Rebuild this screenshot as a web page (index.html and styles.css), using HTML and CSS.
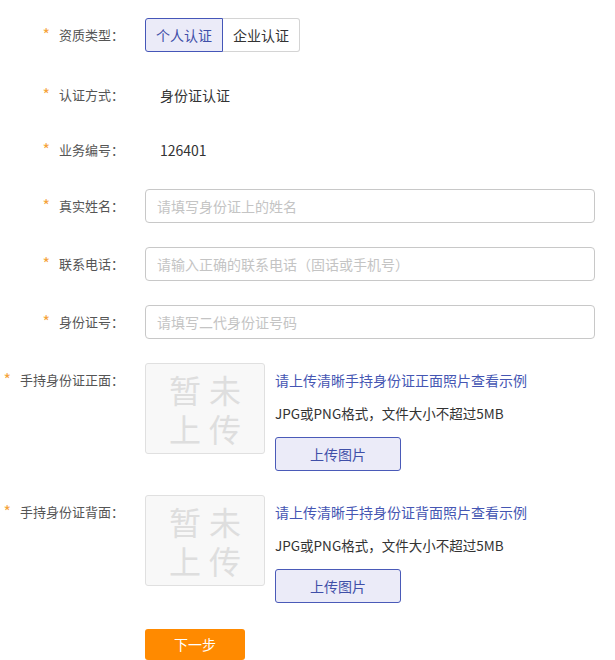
FILE: index.html
```html
<!DOCTYPE html>
<html lang="zh-CN">
<head>
<meta charset="utf-8">
<link rel="stylesheet" href="styles.css">
</head>
<body>
<form class="form">
  <div class="row row-1">
    <div class="label"><span class="star">*</span>资质类型：</div>
    <div class="field">
      <div class="toggle">
        <button type="button" class="tg tg-active">个人认证</button>
        <button type="button" class="tg">企业认证</button>
      </div>
    </div>
  </div>
  <div class="row row-2">
    <div class="label"><span class="star">*</span>认证方式：</div>
    <div class="field"><span class="value">身份证认证</span></div>
  </div>
  <div class="row row-3">
    <div class="label"><span class="star">*</span>业务编号：</div>
    <div class="field"><span class="value">126401</span></div>
  </div>
  <div class="row row-4">
    <div class="label"><span class="star">*</span>真实姓名：</div>
    <div class="field"><input class="input" type="text" placeholder="请填写身份证上的姓名"></div>
  </div>
  <div class="row">
    <div class="label"><span class="star">*</span>联系电话：</div>
    <div class="field"><input class="input" type="text" placeholder="请输入正确的联系电话（固话或手机号）"></div>
  </div>
  <div class="row">
    <div class="label"><span class="star">*</span>身份证号：</div>
    <div class="field"><input class="input" type="text" placeholder="请填写二代身份证号码"></div>
  </div>
  <div class="row row-up">
    <div class="label label-top"><span class="star">*</span>手持身份证正面：</div>
    <div class="field upload">
      <div class="ph">
        <span>暂</span><span>未</span><span>上</span><span>传</span>
      </div>
      <div class="up-info">
        <a class="up-link" href="#">请上传清晰手持身份证正面照片查看示例</a>
        <div class="up-tip">JPG或PNG格式，文件大小不超过5MB</div>
        <button type="button" class="up-btn">上传图片</button>
      </div>
    </div>
  </div>
  <div class="row row-up">
    <div class="label label-top"><span class="star">*</span>手持身份证背面：</div>
    <div class="field upload">
      <div class="ph">
        <span>暂</span><span>未</span><span>上</span><span>传</span>
      </div>
      <div class="up-info">
        <a class="up-link" href="#">请上传清晰手持身份证背面照片查看示例</a>
        <div class="up-tip">JPG或PNG格式，文件大小不超过5MB</div>
        <button type="button" class="up-btn">上传图片</button>
      </div>
    </div>
  </div>
  <div class="row row-submit">
    <div class="label"></div>
    <div class="field"><button type="button" class="next">下一步</button></div>
  </div>
</form>
</body>
</html>
```

FILE: styles.css
```css
* { box-sizing: border-box; }
html, body { margin: 0; padding: 0; background: #fff; }
body {
  font-family: "Noto Sans CJK SC", "Microsoft YaHei", sans-serif;
  color: #333;
  font-size: 14px;
}
.form {
  width: 615px;
  padding: 18px 20px 0 0;
}
.row {
  display: flex;
  align-items: center;
  margin-bottom: 24px;
}
.row-1 { margin-bottom: 26px; }
.row-2 { margin-bottom: 21px; }
.row-3 { margin-bottom: 22px; }
.row-up { align-items: flex-start; }
.row-submit { margin-bottom: 0; }
.label {
  width: 124px;
  height: 34px;
  flex: none;
  margin-right: 21px;
  text-align: right;
  font-size: 13px;
  color: #555;
  line-height: 34px;
  white-space: nowrap;
}
.star {
  color: #f5a33a;
  font-size: 16px;
  line-height: 0;
  margin-right: 9px;
  position: relative;
  top: 1px;
}
.field {
  flex: 1;
  min-width: 0;
  display: flex;
  align-items: center;
}
.toggle { display: flex; }
.tg {
  height: 34px;
  padding: 0 10px;
  font: inherit;
  font-size: 14px;
  color: #333;
  background: #fff;
  border: 1px solid #d4d4d4;
  border-left: none;
  border-radius: 0 3px 3px 0;
  cursor: pointer;
}
.tg-active {
  background: #ebebf8;
  color: #3f4fa8;
  border: 1px solid #4556b8;
  border-radius: 3px 0 0 3px;
}
.value {
  padding-left: 15px;
  line-height: 34px;
  color: #333;
}
.input {
  width: 100%;
  height: 34px;
  border: 1px solid #c8c8c8;
  border-radius: 4px;
  padding: 0 11px;
  font: inherit;
  font-size: 14px;
  color: #333;
  outline: none;
}
.input::placeholder { color: #c4c4c4; }
.upload { align-items: flex-start; }
.ph {
  width: 120px;
  height: 91px;
  flex: none;
  background: #f8f8f8;
  border: 1px solid #e0e0e0;
  border-radius: 3px;
  display: grid;
  grid-template-columns: 32px 32px;
  column-gap: 8px;
  align-content: center;
  justify-content: center;
  font-size: 32px;
  line-height: 39px;
  color: #dedede;
  text-align: center;
}
.up-info {
  margin-left: 10px;
  display: flex;
  flex-direction: column;
  align-items: flex-start;
}
.up-link {
  color: #4556b3;
  text-decoration: none;
  line-height: 34px;
  font-size: 14px;
}
.up-tip {
  line-height: 32px;
  font-size: 13.5px;
  color: #333;
}
.up-btn {
  margin-top: 8px;
  width: 126px;
  height: 34px;
  background: #ebebf8;
  border: 1px solid #4a5ab8;
  border-radius: 3px;
  color: #3f4fa8;
  font: inherit;
  font-size: 14px;
  cursor: pointer;
}
.next {
  width: 100px;
  height: 31px;
  background: #ff8a00;
  border: none;
  border-radius: 3px;
  color: #fff;
  font: inherit;
  font-size: 14px;
  cursor: pointer;
}
```
